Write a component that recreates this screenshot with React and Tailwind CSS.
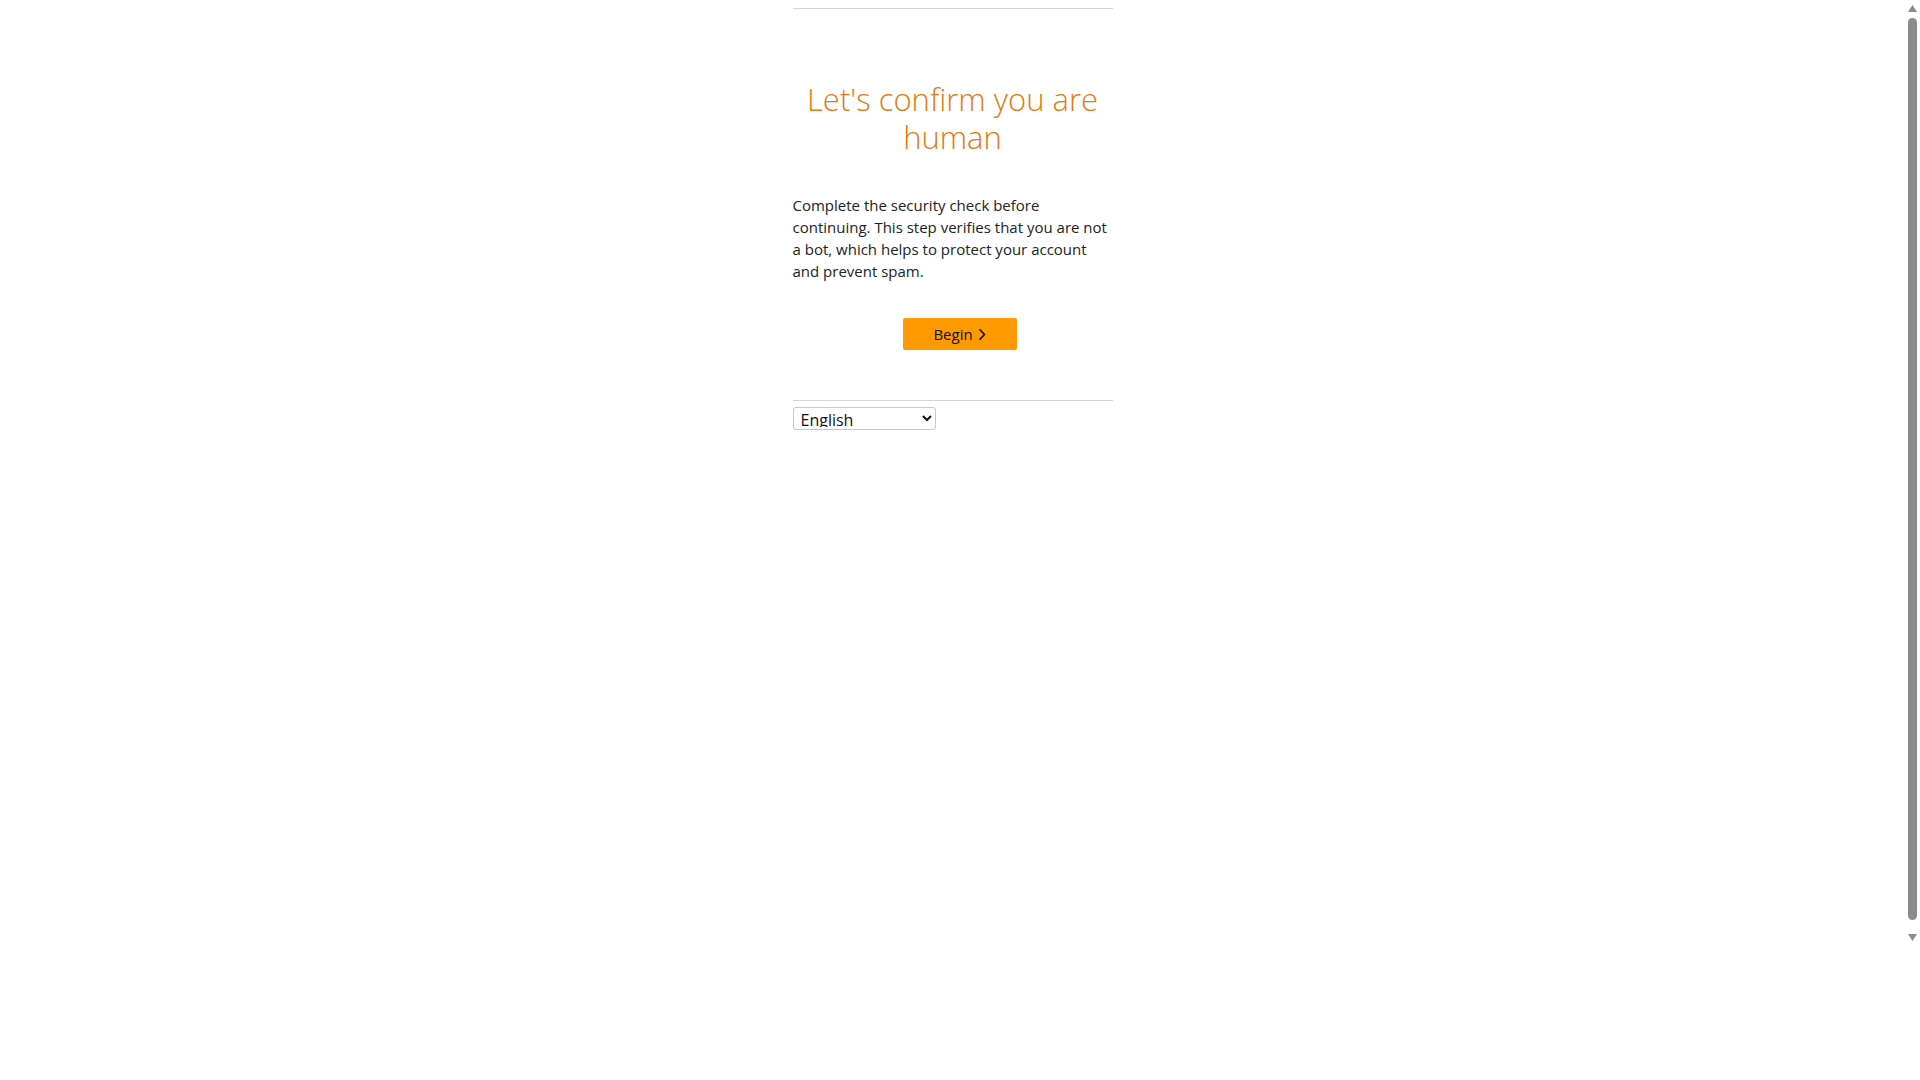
import React, { useState } from "react";

const font = { fontFamily: '"Open Sans", "Noto Sans", Arial, sans-serif' };

const ChevronRight = () => (
    <svg width="8" height="13" viewBox="0 0 8 13" className="ml-[5px]">
        <path d="M1.5 1.2 L6.4 6.5 L1.5 11.8" fill="none" stroke="#0f1111" strokeWidth="1.6" />
    </svg>
);

// plain window scrollbar on the right edge
const ScrollTrack = () => (
    <div className="w-[15px] h-[946px] shrink-0 flex flex-col items-center bg-white">
        <svg width="9" height="7" viewBox="0 0 9 7" className="mt-[5px]">
            <path d="M4.5 0 L9 7 L0 7 Z" fill="#8b8b8b" />
        </svg>
        <div className="mt-[6px] w-[9px] flex-1 rounded-full bg-[#8b8b8b]" />
        <svg width="9" height="7" viewBox="0 0 9 7" className="mt-[14px] mb-[5px]">
            <path d="M0 0 L9 0 L4.5 7 Z" fill="#8b8b8b" />
        </svg>
    </div>
);

const Captcha = () => {
    const [lang, setLang] = useState("en");

    return (
        <div className="w-[320px] mx-auto pt-2" style={font}>
            <div className="border-t border-[#d5d5d5]" />

            <h1 className="mt-[71px] text-center text-[31px] leading-[38px] font-light text-[#e47911]">
                Let's confirm you are
                <br />
                human
            </h1>

            <p className="mt-[38px] text-[15px] leading-[22px] text-[#222]">
                Complete the security check before
                <br />
                continuing. This step verifies that you are not
                <br />
                a bot, which helps to protect your account
                <br />
                and prevent spam.
            </p>

            <div className="mt-[36px] flex justify-center pl-[14px]">
                <button
                    type="button"
                    className="flex items-center justify-center w-[114px] h-[32px] rounded-[2px] bg-[#ff9900] text-[15px] font-medium text-[#0f1111]"
                >
                    Begin
                    <ChevronRight />
                </button>
            </div>

            <div className="mt-[50px] border-t border-[#d5d5d5]" />

            <select
                value={lang}
                onChange={(e) => setLang(e.target.value)}
                className="mt-[6px] w-[143px] h-[23px] px-[3px] py-0 pb-[2px] text-[16px] leading-[18px] text-[#111] bg-white border border-[#c8c8c8] rounded-[3px]"
            >
                <option value="en">English</option>
                <option value="de">Deutsch</option>
                <option value="es">Español</option>
                <option value="fr">Français</option>
            </select>
        </div>
    );
};

export default function App() {
    return (
        <div className="flex min-h-screen bg-white">
            <main className="flex-1">
                <Captcha />
            </main>
            <ScrollTrack />
        </div>
    );
}
